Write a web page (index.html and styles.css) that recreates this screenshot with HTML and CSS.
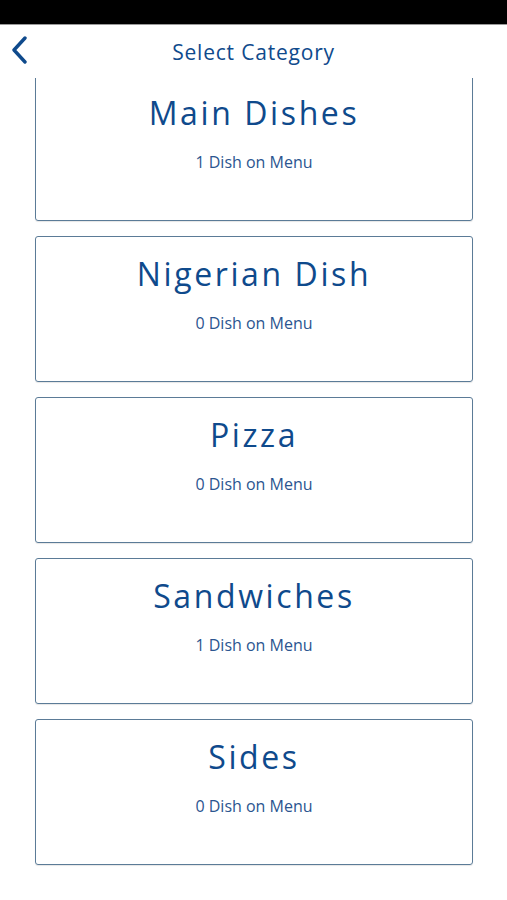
FILE: index.html
```html
<!DOCTYPE html>
<html>
<head>
<meta charset="utf-8">
<link rel="stylesheet" href="styles.css">
</head>
<body>
<div class="status"></div>
<header class="nav">
  <svg class="back" width="18" height="28" viewBox="0 0 18 28"><path d="M14 2 L3 14 L14 26" fill="none" stroke="#0f4a8c" stroke-width="3.4" stroke-linecap="round" stroke-linejoin="round"/></svg>
  <h1 class="title">Select Category</h1>
</header>
<main class="list">
  <div class="card first"><div class="name">Main Dishes</div><div class="count">1 Dish on Menu</div></div>
  <div class="card"><div class="name">Nigerian Dish</div><div class="count">0 Dish on Menu</div></div>
  <div class="card"><div class="name">Pizza</div><div class="count">0 Dish on Menu</div></div>
  <div class="card"><div class="name">Sandwiches</div><div class="count">1 Dish on Menu</div></div>
  <div class="card"><div class="name">Sides</div><div class="count">0 Dish on Menu</div></div>
</main>
</body>
</html>
```
FILE: styles.css
```css
html, body { margin: 0; padding: 0; background: #fff; }
body { width: 507px; height: 900px; overflow: hidden; font-family: "Open Sans", "Noto Sans", sans-serif; }
.status { height: 25px; background: #000; border-bottom: 1px solid #9a9a9a; box-sizing: border-box; }
.nav { height: 53px; position: relative; display: flex; align-items: center; justify-content: center; background: #fff; z-index: 1; }
.back { position: absolute; left: 11px; top: 11px; }
.title { margin: 0; font-size: 21px; font-weight: 400; color: #0f4a8c; letter-spacing: 0.8px; }
.list { display: flex; flex-direction: column; gap: 15px; padding: 0 34px 0 35px; }
.card { height: 146px; box-sizing: border-box; border: 1.6px solid #5b7b97; border-radius: 3px; display: flex; flex-direction: column; align-items: center; box-shadow: 0 1px 1px rgba(0,0,0,0.1); }
.card.first { margin-top: -3px; }
.name { margin-top: 16px; font-size: 32px; line-height: 42px; color: #0f4a8c; letter-spacing: 2.6px; }
.count { margin-top: 18px; font-size: 16px; line-height: 20px; color: #2b5590; letter-spacing: 0; }
```
